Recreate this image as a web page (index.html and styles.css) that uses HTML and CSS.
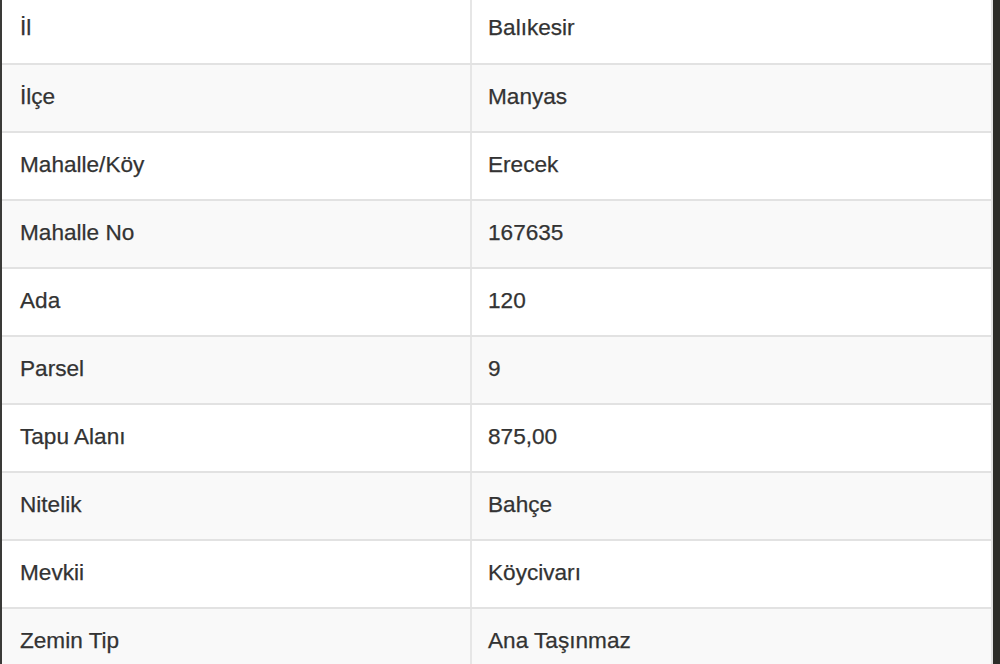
FILE: index.html
```html
<!DOCTYPE html>
<html lang="tr">
<head>
<meta charset="utf-8">
<link rel="stylesheet" href="styles.css">
</head>
<body>
<div class="frame">
  <table class="info">
    <tbody>
      <tr><td class="key">İl</td><td class="val">Balıkesir</td></tr>
      <tr><td class="key">İlçe</td><td class="val">Manyas</td></tr>
      <tr><td class="key">Mahalle/Köy</td><td class="val">Erecek</td></tr>
      <tr><td class="key">Mahalle No</td><td class="val">167635</td></tr>
      <tr><td class="key">Ada</td><td class="val">120</td></tr>
      <tr><td class="key">Parsel</td><td class="val">9</td></tr>
      <tr><td class="key">Tapu Alanı</td><td class="val">875,00</td></tr>
      <tr><td class="key">Nitelik</td><td class="val">Bahçe</td></tr>
      <tr><td class="key">Mevkii</td><td class="val">Köycivarı</td></tr>
      <tr><td class="key">Zemin Tip</td><td class="val">Ana Taşınmaz</td></tr>
    </tbody>
  </table>
</div>
</body>
</html>
```
FILE: styles.css
```css
html, body {
  margin: 0;
  padding: 0;
  height: 100%;
  overflow: hidden;
  background: #2c2c28;
}
.frame {
  width: 1000px;
  height: 664px;
  box-sizing: border-box;
  border-left: 2px solid #3a3a38;
  border-right: 7px solid #2c2c28;
  background: #ffffff;
  overflow: hidden;
}
.info {
  width: 100%;
  margin-top: -4px;
  border-collapse: collapse;
  border-right: 2px solid #e2e2e2;
  font-family: "Liberation Sans", Arial, sans-serif;
  font-size: 22.6px;
  color: #333333;
}
.info tr {
  height: 68px;
}
.info tr:nth-child(even) {
  background: #f9f9f9;
}
.info td {
  padding: 0 18px 3px;
  border-bottom: 2px solid #e2e2e2;
  vertical-align: middle;
  -webkit-text-stroke: 0.25px #333333;
}
.info .key {
  width: 432px;
  border-right: 2px solid #e6e6e6;
}
.info .val {
  padding-left: 16px;
}
```
